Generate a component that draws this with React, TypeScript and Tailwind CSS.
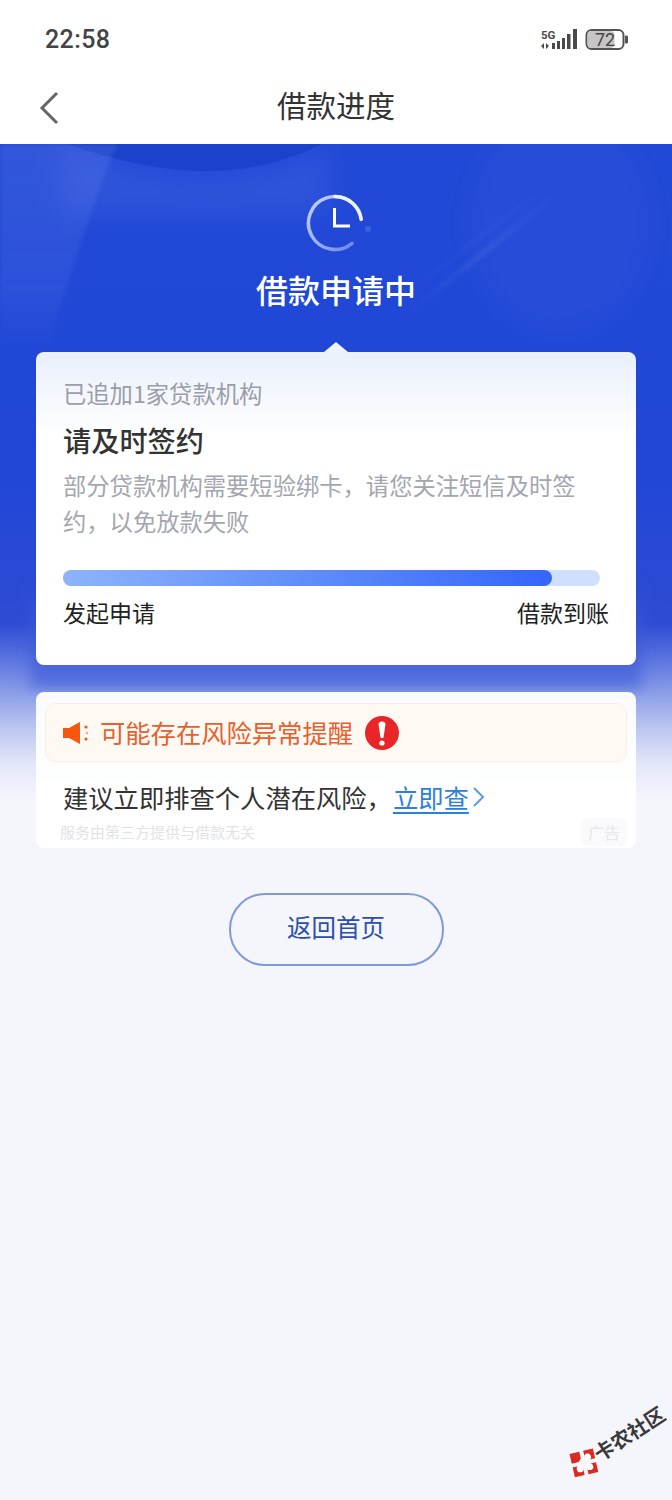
import React from "react";

const cjk = { fontFamily: '"Noto Sans CJK SC", "Noto Sans", sans-serif' };

function HeroBackground() {
  return (
    <div className="absolute left-0 right-0 top-[144px] h-[660px] overflow-hidden bg-[linear-gradient(180deg,#2148d6_0px,#2047d6_200px,#2246d8_340px,#2e4cd2_480px,#5f78e0_518px,#8c9fe8_550px,#bcc7f1_585px,#e3e7f8_620px,#f5f6fc_656px)]">
      <svg width="672" height="660" viewBox="0 0 672 660" className="absolute left-0 top-0" fill="none">
        <defs>
          <linearGradient id="glowL" gradientUnits="userSpaceOnUse" x1="0" y1="0" x2="0" y2="208">
            <stop offset="0" stopColor="#8aa2f4" stopOpacity="0.16" />
            <stop offset="0.7" stopColor="#8aa2f4" stopOpacity="0.11" />
            <stop offset="1" stopColor="#8aa2f4" stopOpacity="0" />
          </linearGradient>
          <linearGradient id="streak" gradientUnits="userSpaceOnUse" x1="557" y1="50" x2="407" y2="170">
            <stop offset="0" stopColor="#8aa2f4" stopOpacity="0" />
            <stop offset="0.5" stopColor="#8aa2f4" stopOpacity="0.16" />
            <stop offset="1" stopColor="#8aa2f4" stopOpacity="0" />
          </linearGradient>
          <linearGradient id="band" x1="0" y1="0" x2="0" y2="1">
            <stop offset="0" stopColor="#2a49d4" />
            <stop offset="0.6" stopColor="#3f5cd8" />
            <stop offset="1" stopColor="#5a73de" />
          </linearGradient>
          <filter id="soft" x="-50%" y="-50%" width="200%" height="200%">
            <feGaussianBlur stdDeviation="2" />
          </filter>
          <filter id="mid" x="-20%" y="-20%" width="140%" height="140%">
            <feGaussianBlur stdDeviation="7" />
          </filter>
          <filter id="softer" x="-100%" y="-100%" width="300%" height="300%">
            <feGaussianBlur stdDeviation="14" />
          </filter>
        </defs>
        <ellipse cx="560" cy="80" rx="90" ry="110" fill="#6f8cf0" fillOpacity="0.07" filter="url(#softer)" />
        <path d="M60 0C112 18 165 31 205 31C255 31 295 18 330 0V70H60Z" fill="#8aa2f4" fillOpacity="0.12" filter="url(#softer)" />
        <path d="M68 0C115 17 165 27 206 27C250 27 290 16 322 0Z" fill="#1c41cb" />
        <path d="M0 0H117L100 43L77 110L47 206H0Z" fill="url(#glowL)" filter="url(#soft)" />
        <path d="M557 50L407 170" stroke="url(#streak)" strokeWidth="5" filter="url(#soft)" />
        <path d="M535 50L395 160" stroke="url(#streak)" strokeWidth="2" filter="url(#soft)" />
        <rect x="30" y="440" width="612" height="104" fill="url(#band)" filter="url(#mid)" />
      </svg>
    </div>
  );
}

function StatusIcons() {
  return (
    <svg width="90" height="26" viewBox="0 0 90 26" fill="none">
      <text x="3" y="12" fontSize="11.5" fontWeight="700" fill="#4a4a4a" fontFamily="Roboto, sans-serif">5G</text>
      <path d="M6 16L3 19L6 22ZM8 16L11 19L8 22Z" fill="#4a4a4a" />
      <g fill="#4a4a4a">
        <rect x="14" y="16" width="3" height="6" />
        <rect x="19" y="14" width="3" height="8" />
        <rect x="24" y="11" width="3" height="11" />
        <rect x="29" y="7" width="3.5" height="15" />
        <rect x="35" y="2" width="4" height="20" />
      </g>
      <rect x="48.5" y="3" width="37" height="19" rx="5" fill="#fff" stroke="#555" strokeWidth="2" />
      <rect x="49.5" y="4" width="27" height="17" rx="4" fill="#c6c6c6" />
      <text x="67" y="19" textAnchor="middle" fontSize="18" fontWeight="400" fill="#444" fontFamily="Roboto, sans-serif">72</text>
      <rect x="87" y="8.5" width="3" height="8" rx="1" fill="#555" />
    </svg>
  );
}

export default function App() {
  return (
    <div className="relative min-h-[1500px] w-[672px] overflow-hidden bg-[#f5f6fc]" style={cjk}>
      <HeroBackground />

      <header className="relative h-[144px] bg-white">
        <div className="flex h-[72px] items-center justify-between pl-[45px] pr-[44px] pt-[8px]">
          <span className="text-[25px] font-medium tracking-[0.4px] text-[#444]" style={{ fontFamily: "Roboto, sans-serif" }}>22:58</span>
          <StatusIcons />
        </div>
        <div className="relative flex h-[72px] items-center justify-center pb-[7px]">
          <svg width="22" height="34" viewBox="0 0 22 34" fill="none" className="absolute left-[39px] top-[19px]">
            <path d="M18 2L3 17L18 32" stroke="#666" strokeWidth="3" />
          </svg>
          <h1 className="text-[29.5px] font-normal text-[#333]">借款进度</h1>
        </div>
      </header>

      <main className="relative flex flex-col items-center">
        <svg width="70" height="64" viewBox="0 0 70 64" fill="none" className="mt-[49px]">
          <defs>
            <linearGradient id="ring" x1="0" y1="0" x2="1" y2="1">
              <stop offset="0" stopColor="#c6d3fb" />
              <stop offset="0.6" stopColor="#94aaf4" />
              <stop offset="1" stopColor="#5c7ae6" />
            </linearGradient>
          </defs>
          <path d="M60.2 26.3A26.5 26.5 0 1 0 51 50.3" stroke="url(#ring)" strokeWidth="3.5" strokeLinecap="round" />
          <path d="M60.2 26.3A26.5 26.5 0 0 0 34 3.5" stroke="#eef2ff" strokeWidth="3.5" strokeLinecap="round" />
          <path d="M33.5 15V33H49" stroke="#fff" strokeWidth="3" />
          <circle cx="67" cy="36" r="3" fill="#3d60dd" />
        </svg>
        <h2 className="mt-[8px] text-[32px] font-medium leading-[48px] text-white">借款申请中</h2>

        <div className="relative mt-[39px] h-[313px] w-[600px] rounded-[8px] bg-[linear-gradient(180deg,#e9f0fc_0px,#ffffff_85px)] pl-[27px] pr-[27px] pt-[24px]">
          <div className="absolute left-[288px] top-[-10px] h-0 w-0 border-x-[12px] border-b-[10px] border-x-transparent border-b-[#eef3fe]" />
          <div className="text-[23.3px] leading-[34px] text-[#9a9ea8]">已追加1家贷款机构</div>
          <div className="mt-[12px] text-[28.2px] font-medium leading-[36px] text-[#333]">请及时签约</div>
          <p className="mt-[9px] text-[23.3px] leading-[36px] text-[#a3a6af]">部分贷款机构需要短验绑卡，请您关注短信及时签约，以免放款失败</p>
          <div className="mt-[31px] h-[16px] w-[537px] rounded-full bg-[#cfe0ff]">
            <div className="h-full w-[489px] rounded-full bg-[linear-gradient(90deg,#8db4fb,#3366fa)]" />
          </div>
          <div className="mt-[9px] flex justify-between text-[23px] leading-[34px] text-[#222]">
            <span>发起申请</span>
            <span>借款到账</span>
          </div>
        </div>

        <div className="relative mt-[27px] h-[156px] w-[600px] overflow-hidden rounded-[8px] bg-white/95 px-[9px] pt-[11px]">
          <div className="flex h-[59px] items-center rounded-[10px] border border-[#f8eee4] bg-[#fff9f3] pl-[17px]">
            <svg width="27" height="22" viewBox="0 0 27 22" fill="none">
              <path d="M0 6H6L17 0V22L6 16H0Z" fill="#f4570f" />
              <circle cx="23" cy="5" r="1.6" fill="#f4570f" />
              <circle cx="24" cy="11" r="1.2" fill="#f4570f" fillOpacity="0.5" />
              <circle cx="23" cy="17" r="1.6" fill="#f4570f" />
            </svg>
            <span className="ml-[10px] text-[25.3px] text-[#e8602c]">可能存在风险异常提醒</span>
            <svg width="34" height="34" viewBox="0 0 34 34" className="ml-[12px]">
              <circle cx="17" cy="17" r="17" fill="#e8262a" />
              <path d="M13.5 8C13.5 4.5 20.5 4.5 20.5 8L18.6 21C18.3 22.6 15.7 22.6 15.4 21Z" fill="#fff" />
              <circle cx="17" cy="27" r="2.6" fill="#fff" />
            </svg>
          </div>
          <div className="mt-[15px] flex items-center pl-[18px] text-[25.3px] leading-[40px] text-[#333]">
            <span>建议立即排查个人潜在风险，</span>
            <span className="ml-[1px] underline decoration-[2px] underline-offset-[4px] text-[#2b7fe0]">立即查</span>
            <svg width="14" height="22" viewBox="0 0 14 22" fill="none" className="ml-[3px]">
              <path d="M2 2L11 11L2 20" stroke="#5b9bea" strokeWidth="2" />
            </svg>
          </div>
          <div className="mt-[1px] flex items-center justify-between pl-[15px] pr-0">
            <span className="text-[15px] leading-[20px] text-[#e2e3e6]">服务由第三方提供与借款无关</span>
            <span className="rounded-[6px] bg-[#fafafc] px-[7px] text-[16px] leading-[28px] text-[#e6e7ea]">广告</span>
          </div>
        </div>

        <button className="mt-[45px] flex h-[73px] w-[215px] items-center justify-center rounded-[36px] border-2 border-[#7f9ad8] bg-transparent pb-[4px] text-[24.5px] text-[#2c4fae]">
          返回首页
        </button>
      </main>

      <div className="absolute left-[573px] top-[1442px] flex h-[56px] w-[110px] origin-left rotate-[-33deg] items-center">
        <svg width="26" height="26" viewBox="0 0 26 26" fill="none" className="rotate-[20deg]">
          <path d="M1 1H11V8L8 11H1ZM15 1H25V11H18L15 8ZM1 15H8L11 18V25H1ZM18 15H25V25H15V18Z" fill="#db2a22" />
          <circle cx="8" cy="18" r="3.4" fill="#fff" />
          <circle cx="18" cy="8" r="3.4" fill="#fff" />
          <circle cx="18" cy="18" r="3.4" fill="#fff" />
        </svg>
        <span className="ml-[1px] whitespace-nowrap text-[20px] font-bold leading-[24px] text-[#3a3a3a]">卡农社区</span>
      </div>
    </div>
  );
}
